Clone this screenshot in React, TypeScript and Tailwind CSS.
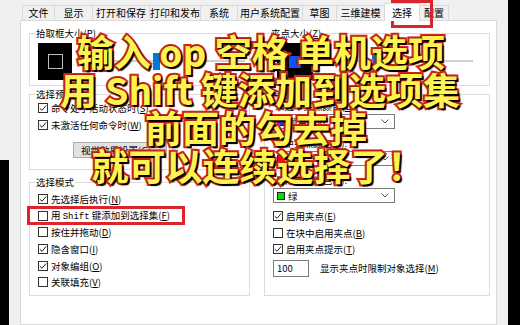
import React from "react";

function Check({ checked }: { checked?: boolean }) {
  return (
    <span className="w-[10px] h-[10px] border border-[#333333] bg-white flex items-center justify-center shrink-0">
      {checked && (
        <svg width="8" height="8" viewBox="0 0 8 8">
          <path d="M0.8 4.2 L3 6.3 L7.2 1.4" fill="none" stroke="#222" strokeWidth="1" />
        </svg>
      )}
    </span>
  );
}

function Acc({ text, k, suffix }: { text: React.ReactNode; k: string; suffix?: string }) {
  return (
    <span className="whitespace-pre">
      {text}(<span className="underline">{k}</span>){suffix}
    </span>
  );
}

function Row({ checked, children }: { checked?: boolean; children: React.ReactNode }) {
  return (
    <div className="flex items-center h-[16.6px] gap-[3px]">
      <Check checked={checked} />
      {children}
    </div>
  );
}

function Combo({ swatch, label }: { swatch: string; label: string }) {
  return (
    <div className="ml-[8px] w-[122px] h-[15px] border border-[#7a7a7a] bg-white flex items-center pl-[3px] pr-[5px]">
      <span className={"w-[8px] h-[8px] border border-[#222] " + swatch} />
      <span className="ml-[3px] flex-1">{label}</span>
      <svg width="8" height="5" viewBox="0 0 8 5">
        <path d="M0.5 0.5 L4 4 L7.5 0.5" fill="none" stroke="#555" strokeWidth="1" />
      </svg>
    </div>
  );
}

const tabs: { t: string; w: string; sel?: boolean }[] = [
  { t: "文件", w: "w-[33px]" },
  { t: "显示", w: "w-[39px]" },
  { t: "打开和保存", w: "w-[58px]" },
  { t: "打印和发布", w: "w-[52px]" },
  { t: "系统", w: "w-[38px]" },
  { t: "用户系统配置", w: "w-[66px]" },
  { t: "草图", w: "w-[35px]" },
  { t: "三维建模", w: "w-[49px]" },
  { t: "选择", w: "w-[36px]", sel: true },
  { t: "配置", w: "w-[30px]" },
];

export default function App() {
  return (
    <div className="relative w-[520px] h-[325px] overflow-hidden bg-[#f0f0f0] flex font-['Noto_Sans_CJK_SC',sans-serif] text-black text-[9.5px] leading-[12px]">
      {/* left strip */}
      <div className="w-[20px] flex flex-col">
        <div className="h-[160px]" />
        <div className="flex-1 w-[9px] bg-black" />
      </div>

      {/* dialog */}
      <div className="w-[477px] flex flex-col">
        <div className="h-[20px] flex items-end pl-[2px] text-[10px] leading-none">
          {tabs.map((tb) =>
            tb.sel ? (
              <div
                key={tb.t}
                className={tb.w + " relative z-10 -ml-px mb-[-1px] h-[18px] bg-white border border-b-0 border-[#d9d9d9] flex items-center justify-center"}
              >
                {tb.t}
              </div>
            ) : (
              <div
                key={tb.t}
                className={tb.w + " -ml-px first:ml-0 h-[15px] bg-[#f0f0f0] border border-b-0 border-[#d9d9d9] flex items-center justify-center"}
              >
                {tb.t}
              </div>
            )
          )}
        </div>

        <div className="flex-1 bg-white border border-[#d9d9d9] flex gap-[14px] pl-[8px] pt-[6px]">
          {/* left column */}
          <div className="w-[221px] flex flex-col">
            <fieldset className="h-[59px] border border-[#dcdcdc]">
              <legend className="ml-[5px] px-[1px]">
                <Acc text="拾取框大小" k="P" />
              </legend>
              <div className="flex items-center mt-[4px]">
                <div className="ml-[8px] w-[34px] h-[37px] bg-black flex items-center justify-center">
                  <div className="w-[15px] h-[15px] border-[1.5px] border-[#bdbdbd]" />
                </div>
                <div className="relative ml-[6px] mr-[4px] flex-1 h-[17px]">
                  <div className="absolute left-0 right-0 top-[7px] h-[2px] bg-[#cfcfcf]" />
                  <div className="absolute top-0 left-[75px] w-[7px] h-[17px] bg-[#0078d7]" />
                </div>
              </div>
            </fieldset>

            <fieldset className="mt-[2px] h-[82px] border border-[#dcdcdc] pl-[8px]">
              <legend className="ml-[-3px] px-[1px]">选择预览</legend>
              <Row checked>
                <Acc text="命令处于活动状态时" k="S" />
              </Row>
              <Row checked>
                <Acc text="未激活任何命令时" k="W" />
              </Row>
              <div className="mt-[9px] ml-[35px] w-[94px] h-[16px] bg-[#e1e1e1] border border-[#adadad] flex items-center justify-center">
                <Acc text="视觉效果设置" k="G" suffix="..." />
              </div>
            </fieldset>

            <fieldset className="mt-[6px] h-[120px] border border-[#dcdcdc] pl-[8px]">
              <legend className="ml-[-3px] px-[1px]">选择模式</legend>
              <div className="h-[3px]" />
              <Row checked>
                <Acc text="先选择后执行" k="N" />
              </Row>
              <Row>
                <Acc
                  text={
                    <>
                      用 <span className="font-['Liberation_Mono',monospace] text-[9px]">Shift</span> 键添加到选择集
                    </>
                  }
                  k="F"
                />
              </Row>
              <Row>
                <Acc text="按住并拖动" k="D" />
              </Row>
              <Row checked>
                <Acc text="隐含窗口" k="I" />
              </Row>
              <Row checked>
                <Acc text="对象编组" k="O" />
              </Row>
              <Row>
                <Acc text="关联填充" k="V" />
              </Row>
            </fieldset>
          </div>

          {/* right column */}
          <div className="w-[226px] flex flex-col">
            <fieldset className="h-[59px] border border-[#dcdcdc]">
              <legend className="ml-[5px] px-[1px]">
                <Acc text="夹点大小" k="Z" />
              </legend>
              <div className="flex items-center mt-[4px]">
                <div className="ml-[12px] w-[36px] h-[37px] bg-black flex items-center justify-center">
                  <div className="w-[12px] h-[12px] bg-[#1a4cff]" />
                </div>
                <div className="relative ml-[4px] mr-[16px] flex-1 h-[17px]">
                  <div className="absolute left-0 right-0 top-[7px] h-[2px] bg-[#cfcfcf]" />
                  <div className="absolute top-0 left-[55px] w-[7px] h-[17px] bg-[#0078d7]" />
                </div>
              </div>
            </fieldset>

            <fieldset className="mt-[2px] h-[208px] border border-[#dcdcdc]">
              <legend className="ml-[5px] px-[1px]">夹点</legend>
              <div className="ml-[10px] h-[12px]">
                <Acc text="未选中夹点颜色" k="U" suffix=":" />
              </div>
              <div className="mt-[2px]">
                <Combo swatch="bg-[#1a3cff]" label="颜色 150" />
              </div>
              <div className="ml-[10px] mt-[8px] h-[12px]">
                <Acc text="选中夹点颜色" k="C" suffix=":" />
              </div>
              <div className="mt-[2px]">
                <Combo swatch="bg-[#ff0000]" label="红" />
              </div>
              <div className="ml-[10px] mt-[8px] h-[12px]">
                <Acc text="悬停夹点颜色" k="R" suffix=":" />
              </div>
              <div className="mt-[2px]">
                <Combo swatch="bg-[#00e000]" label="绿" />
              </div>
              <div className="pl-[8px] mt-[5px]">
                <Row checked>
                  <Acc text="启用夹点" k="E" />
                </Row>
                <Row>
                  <Acc text="在块中启用夹点" k="B" />
                </Row>
                <Row checked>
                  <Acc text="启用夹点提示" k="T" />
                </Row>
                <div className="mt-[2px] flex items-center">
                  <div className="w-[36px] h-[17px] border border-[#7a7a7a] bg-white flex items-center pl-[3px]">100</div>
                  <div className="ml-[11px]">
                    <Acc text="显示夹点时限制对象选择" k="M" />
                  </div>
                </div>
              </div>
            </fieldset>
          </div>
        </div>
      </div>

      <div className="w-[11px]" />
      <div className="w-[12px] bg-black" />

      {/* annotation boxes */}
      <div className="absolute left-[391px] top-0 w-[42px] h-[28px] border-[3px] border-[#d9252b]" />
      <div className="absolute left-[27px] top-[206px] w-[158px] h-[19px] border-[3px] border-[#d9252b]" />

      {/* overlay caption */}
      <div className="absolute left-0 top-[32px] w-[520px] flex flex-col items-center font-bold text-[37px] leading-[38px] text-[#fff350] whitespace-pre [-webkit-text-stroke:4px_#e0281c] [paint-order:stroke_fill] [text-shadow:2px_2px_1px_#000,0_0_2px_#300]">
        <div className="pl-[2px]">输入 op 空格 单机选项</div>
        <div>用 Shift 键添加到选项集</div>
        <div className="pr-[8px]">前面的勾去掉</div>
        <div className="pr-[4px]">就可以连续选择了！</div>
      </div>
    </div>
  );
}
